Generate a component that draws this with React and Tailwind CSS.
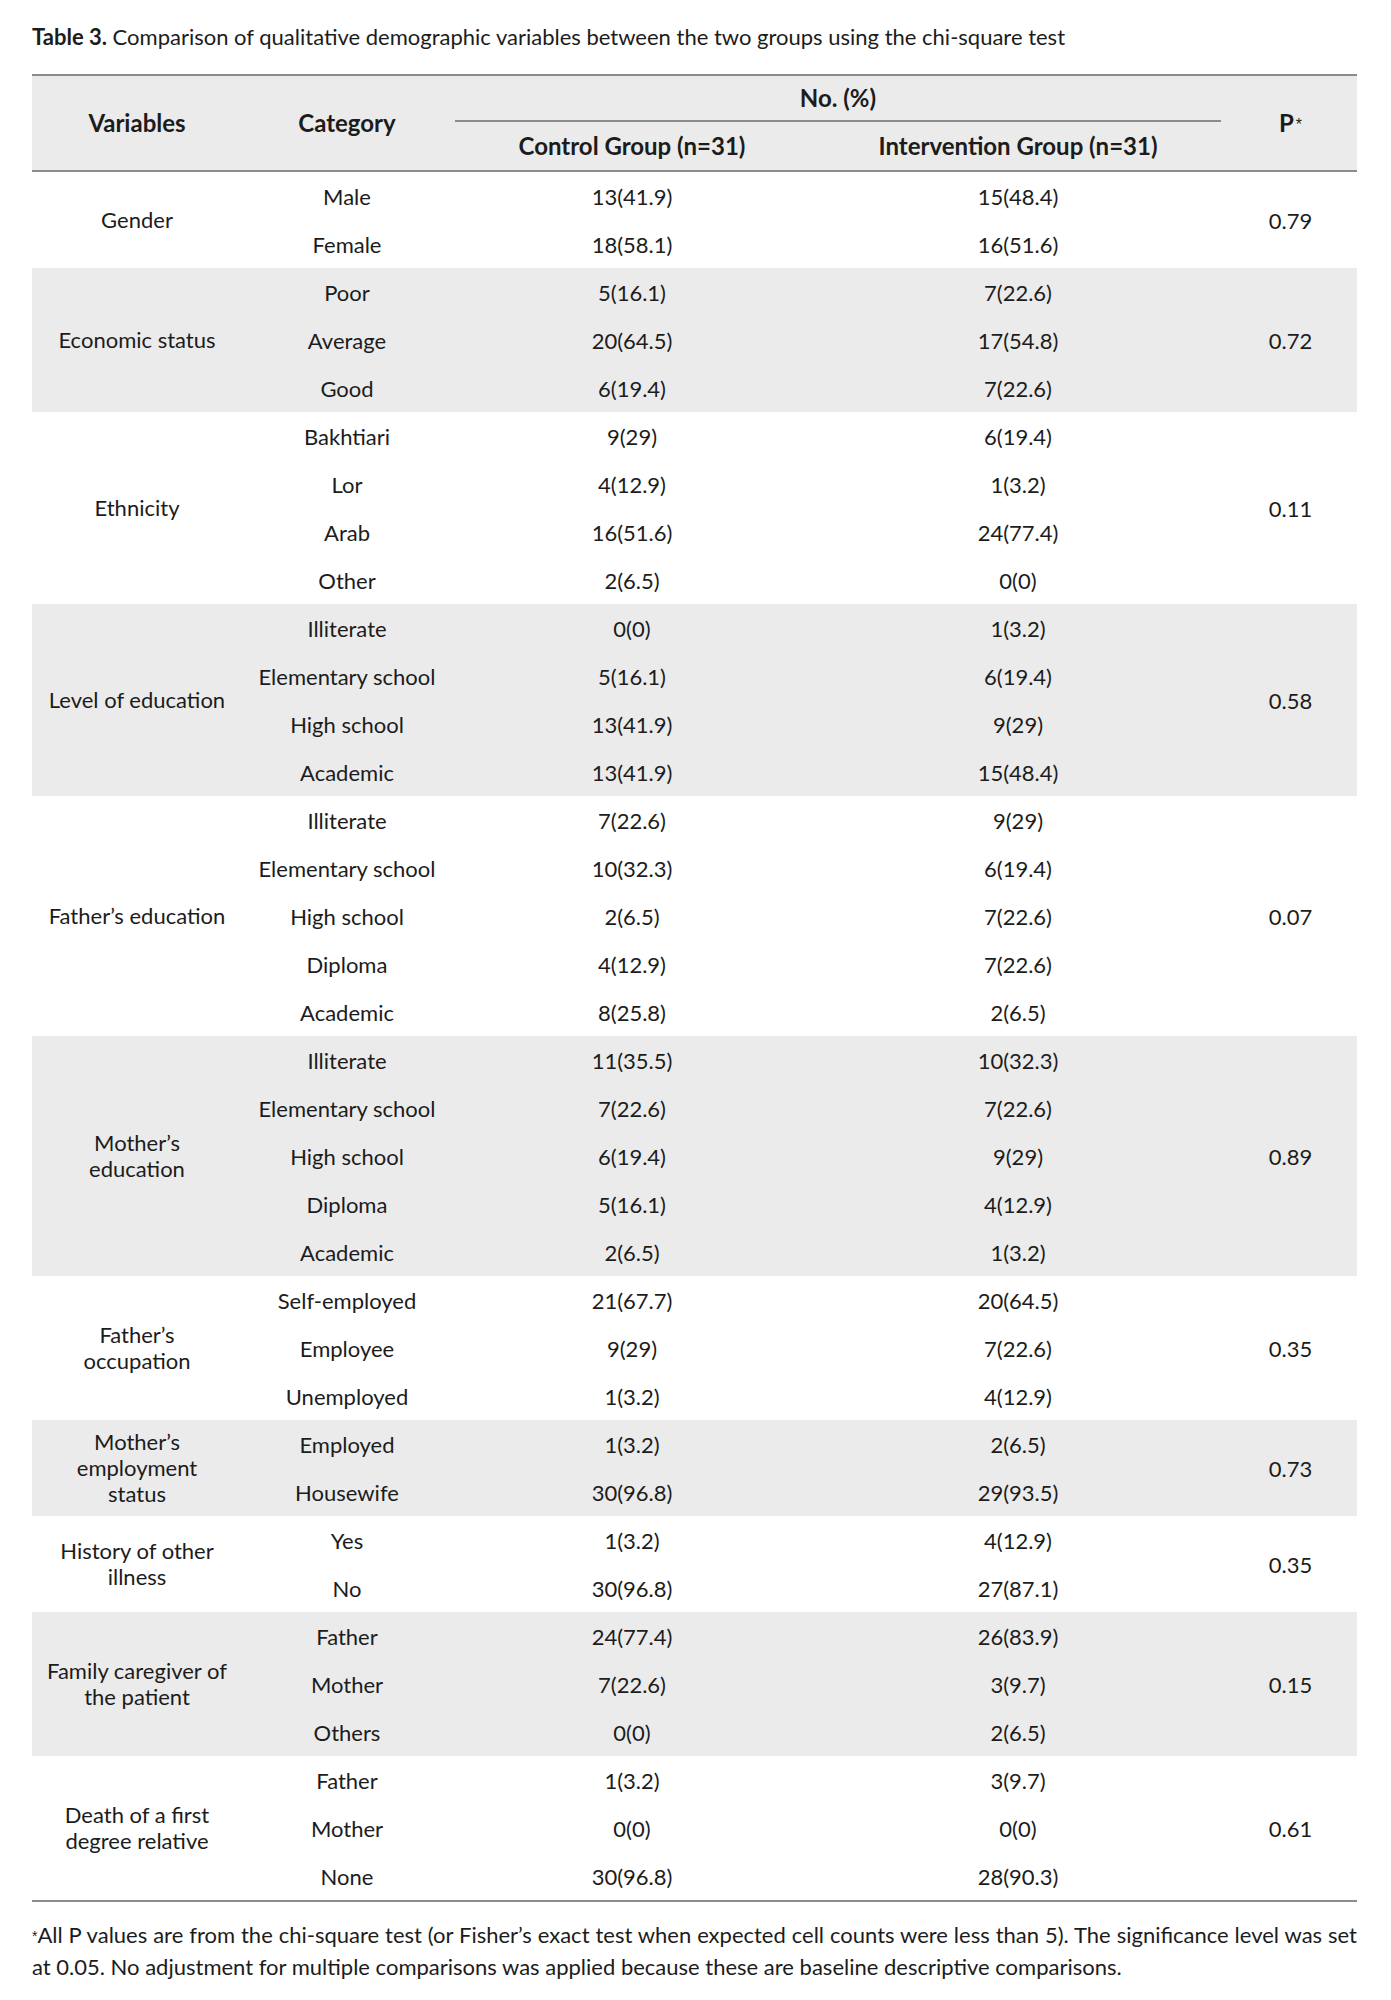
import React from 'react';

const groups = [
  { name: ['Gender'], p: '0.79', shade: false, rows: [
    ['Male', '13(41.9)', '15(48.4)'],
    ['Female', '18(58.1)', '16(51.6)'],
  ] },
  { name: ['Economic status'], p: '0.72', shade: true, rows: [
    ['Poor', '5(16.1)', '7(22.6)'],
    ['Average', '20(64.5)', '17(54.8)'],
    ['Good', '6(19.4)', '7(22.6)'],
  ] },
  { name: ['Ethnicity'], p: '0.11', shade: false, rows: [
    ['Bakhtiari', '9(29)', '6(19.4)'],
    ['Lor', '4(12.9)', '1(3.2)'],
    ['Arab', '16(51.6)', '24(77.4)'],
    ['Other', '2(6.5)', '0(0)'],
  ] },
  { name: ['Level of education'], p: '0.58', shade: true, rows: [
    ['Illiterate', '0(0)', '1(3.2)'],
    ['Elementary school', '5(16.1)', '6(19.4)'],
    ['High school', '13(41.9)', '9(29)'],
    ['Academic', '13(41.9)', '15(48.4)'],
  ] },
  { name: ['Father\u2019s education'], p: '0.07', shade: false, rows: [
    ['Illiterate', '7(22.6)', '9(29)'],
    ['Elementary school', '10(32.3)', '6(19.4)'],
    ['High school', '2(6.5)', '7(22.6)'],
    ['Diploma', '4(12.9)', '7(22.6)'],
    ['Academic', '8(25.8)', '2(6.5)'],
  ] },
  { name: ['Mother\u2019s', 'education'], p: '0.89', shade: true, rows: [
    ['Illiterate', '11(35.5)', '10(32.3)'],
    ['Elementary school', '7(22.6)', '7(22.6)'],
    ['High school', '6(19.4)', '9(29)'],
    ['Diploma', '5(16.1)', '4(12.9)'],
    ['Academic', '2(6.5)', '1(3.2)'],
  ] },
  { name: ['Father\u2019s', 'occupation'], p: '0.35', shade: false, rows: [
    ['Self-employed', '21(67.7)', '20(64.5)'],
    ['Employee', '9(29)', '7(22.6)'],
    ['Unemployed', '1(3.2)', '4(12.9)'],
  ] },
  { name: ['Mother\u2019s', 'employment', 'status'], p: '0.73', shade: true, rows: [
    ['Employed', '1(3.2)', '2(6.5)'],
    ['Housewife', '30(96.8)', '29(93.5)'],
  ] },
  { name: ['History of other', 'illness'], p: '0.35', shade: false, rows: [
    ['Yes', '1(3.2)', '4(12.9)'],
    ['No', '30(96.8)', '27(87.1)'],
  ] },
  { name: ['Family caregiver of', 'the patient'], p: '0.15', shade: true, rows: [
    ['Father', '24(77.4)', '26(83.9)'],
    ['Mother', '7(22.6)', '3(9.7)'],
    ['Others', '0(0)', '2(6.5)'],
  ] },
  { name: ['Death of a first', 'degree relative'], p: '0.61', shade: false, rows: [
    ['Father', '1(3.2)', '3(9.7)'],
    ['Mother', '0(0)', '0(0)'],
    ['None', '30(96.8)', '28(90.3)'],
  ] },
];

function Group({ group }) {
  return (
    <div className={group.shade ? 'flex bg-[#ebebeb]' : 'flex bg-white'}>
      <div className="w-[210px] flex flex-col items-center justify-center text-center leading-[26px]">
        {group.name.map(line => (
          <span key={line}>{line}</span>
        ))}
      </div>
      <div className="flex flex-col">
        {group.rows.map(row => (
          <div key={row[0]} className="flex h-12 items-center text-center">
            <div className="w-[210px]">{row[0]}</div>
            <div className="w-[360px]">{row[1]}</div>
            <div className="w-[412px]">{row[2]}</div>
          </div>
        ))}
      </div>
      <div className="w-[133px] flex items-center justify-center">{group.p}</div>
    </div>
  );
}

// asterisk in Lato is tiny, borrow Liberation Sans for it
function Star({ className }) {
  return (
    <sup
      className={className}
      style={{ fontFamily: '"Liberation Sans", sans-serif' }}
    >
      *
    </sup>
  );
}

export default function App() {
  return (
    <div
      className="bg-white w-[1391px] min-h-[2000px] pl-[32px] pr-[34px] pt-[21px] text-[#1c1c1c] text-[22px]"
      style={{ fontFamily: 'Lato, "Liberation Sans", sans-serif' }}
    >
      <p className="leading-[32px] text-[22px]">
        <span className="font-bold">Table 3.</span> Comparison of qualitative demographic variables between the two groups using the chi-square test
      </p>

      <div className="mt-[21px] border-t-2 border-b-2 border-[#8c8c8c]">
        {/* header */}
        <div className="flex h-[96px] bg-[#ebebeb] border-b-2 border-[#8c8c8c] font-bold text-[24px]">
          <div className="w-[210px] flex items-center justify-center">Variables</div>
          <div className="w-[210px] flex items-center justify-center">Category</div>
          <div className="w-[772px] flex flex-col">
            <div className="h-[46px] flex items-center justify-center mx-[3px] border-b-2 border-[#8c8c8c]">No. (%)</div>
            <div className="flex-1 flex">
              <div className="w-[360px] flex items-center justify-center">Control Group (n=31)</div>
              <div className="w-[412px] flex items-center justify-center">Intervention Group (n=31)</div>
            </div>
          </div>
          <div className="w-[133px] flex items-center justify-center">
            <span>P<Star className="text-[16px] font-normal relative -top-[2px] ml-[2px]" /></span>
          </div>
        </div>

        {groups.map(g => (
          <Group key={g.name.join(' ')} group={g} />
        ))}
      </div>

      <div className="mt-[17px] text-[22px] leading-[32px]">
        <p className="text-justify [text-align-last:justify]">
          <Star className="text-[14px] relative -top-[2px]" />All P values are from the chi-square test (or Fisher’s exact test when expected cell counts were less than 5). The significance level was set
        </p>
        <p>at 0.05. No adjustment for multiple comparisons was applied because these are baseline descriptive comparisons.</p>
      </div>
    </div>
  );
}
